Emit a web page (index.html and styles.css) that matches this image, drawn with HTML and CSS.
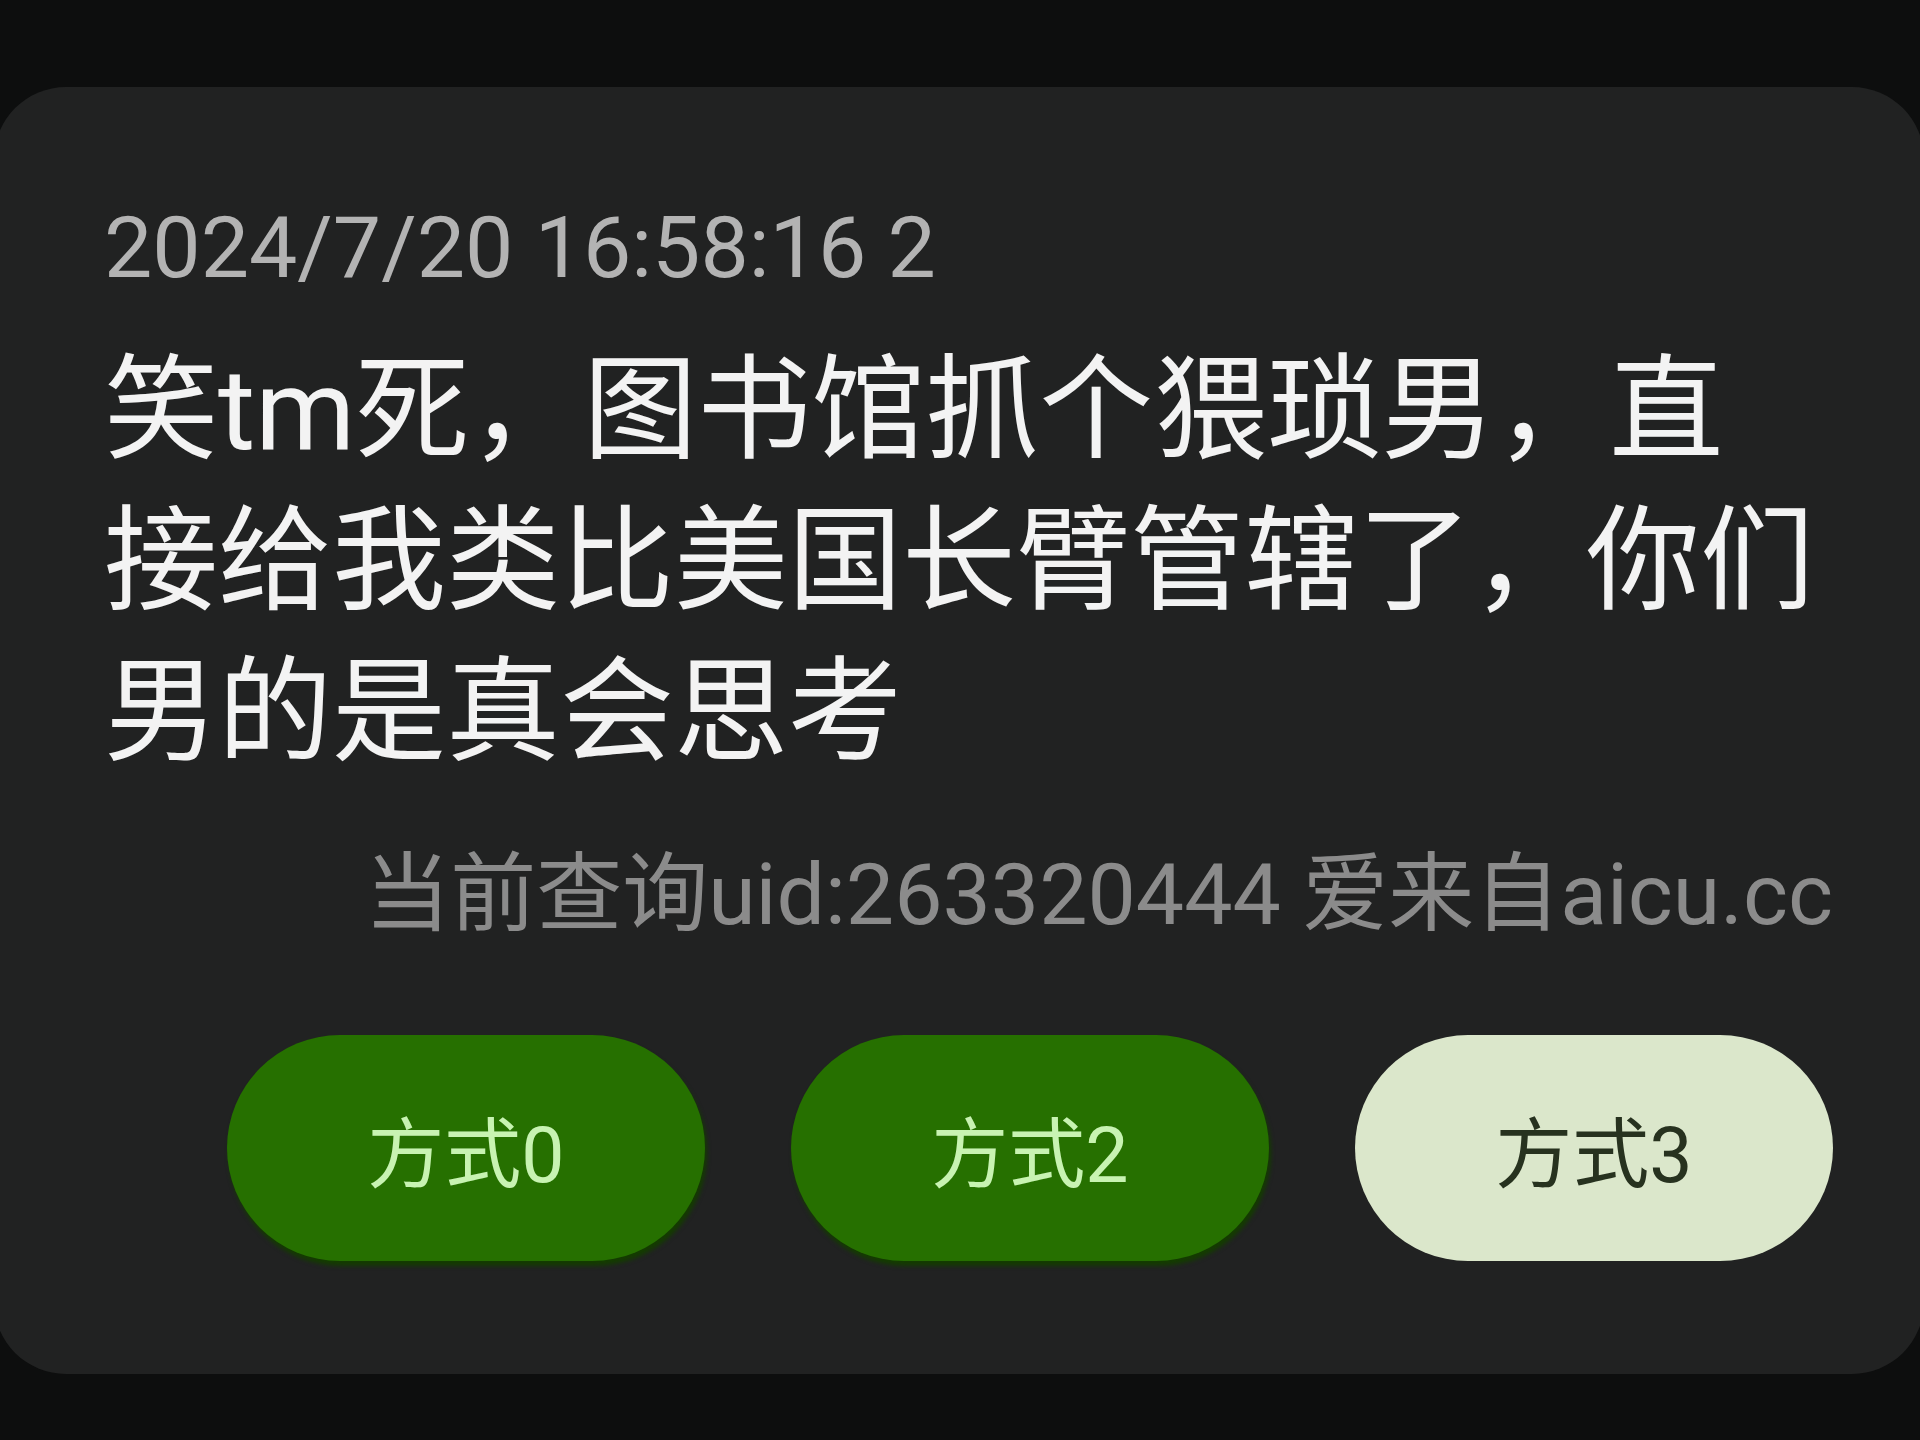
FILE: index.html
```html
<!DOCTYPE html>
<html lang="zh-CN">
<head>
<meta charset="utf-8">
<title>aicu</title>
<link rel="stylesheet" href="styles.css">
</head>
<body>
<div class="screen">
  <div class="card">
    <div class="date">2024/7/20 16:58:16 2</div>
    <div class="content">笑tm死，图书馆抓个猥琐男，直<br>接给我类比美国长臂管辖了，你们<br>男的是真会思考</div>
    <div class="uid">当前查询uid:263320444 爱来自aicu.cc</div>
    <div class="actions">
      <div class="btn btn-green">方式0</div>
      <div class="btn btn-green">方式2</div>
      <div class="btn btn-light">方式3</div>
    </div>
  </div>
</div>
</body>
</html>
```

FILE: styles.css
```css
html, body {
  margin: 0;
  padding: 0;
  background: #0d0e0e;
  width: 1920px;
  height: 1440px;
  overflow: hidden;
}

.screen {
  padding-top: 87px;
  font-family: Roboto, "Noto Sans CJK SC", sans-serif;
}

.card {
  margin-left: -6px;
  width: 1930px;
  height: 1287px;
  box-sizing: border-box;
  background: #212222;
  border-radius: 72px;
  padding: 111px 91px 0 110px;
  display: flex;
  flex-direction: column;
}

.date {
  font-size: 86px;
  line-height: 100px;
  color: #b3b3b3;
}

.content {
  margin-top: 37px;
  font-size: 114px;
  line-height: 151px;
  color: #f3f3f3;
  white-space: nowrap;
}

.uid {
  margin-top: 57px;
  font-size: 86px;
  line-height: 100px;
  color: #8b8b8b;
  text-align: right;
}

.actions {
  margin-top: 90px;
  display: flex;
  justify-content: flex-end;
  gap: 86px;
}

.btn {
  width: 478px;
  height: 226px;
  border-radius: 113px;
  display: flex;
  align-items: center;
  justify-content: center;
  font-size: 77px;
  font-weight: 400;
  font-family: Roboto, "Noto Sans CJK SC", sans-serif;
}

.btn-green {
  background: #267000;
  color: #c8f3b2;
  box-shadow: 2px 5px 4px #143c00;
}

.btn-light {
  background: #dbe7cb;
  color: #27321f;
}
```
